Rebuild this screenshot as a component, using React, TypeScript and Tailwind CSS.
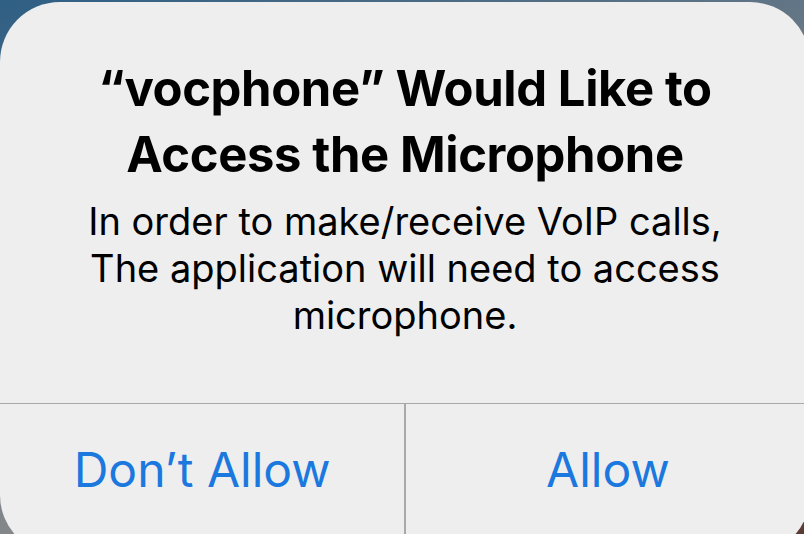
import React from 'react';

const font = { fontFamily: 'Inter, "Liberation Sans", sans-serif' };

export default function App() {
    return (
        <div
            className="relative h-[534px] w-[804px] overflow-hidden bg-[linear-gradient(160deg,#2f5f84_0%,#6f7b86_45%,#8a8a8a_70%,#5a3a34_100%)]"
            style={font}
        >
            {/* Alert card */}
            <div className="mt-[2px] flex h-[553px] w-[810px] flex-col rounded-[60px] bg-[#eeeeee]">
                {/* Body */}
                <div className="flex flex-col items-center px-6 pt-[54px] pb-[64px] text-center text-black">
                    <h1 className="text-[49px] leading-[66px] font-bold tracking-[-0.4px]">
                        “vocphone” Would Like to
                        <br />
                        Access the Microphone
                    </h1>
                    <p className="mt-[10px] text-[38px] leading-[47px] font-normal">
                        In order to make/receive VoIP calls,
                        <br />
                        The application will need to access
                        <br />
                        microphone.
                    </p>
                </div>

                {/* Actions */}
                <div className="flex h-[141px] border-t-[1.5px] border-[#a9a9a9]">
                    <button className="flex flex-1 items-center justify-center pb-[8px] text-[48px] text-[#1b78de]">
                        Don’t Allow
                    </button>
                    <div className="w-[1.5px] bg-[#a9a9a9]" />
                    <button className="flex flex-1 items-center justify-center pb-[8px] text-[48px] text-[#1b78de]">
                        Allow
                    </button>
                </div>
            </div>
        </div>
    );
}
